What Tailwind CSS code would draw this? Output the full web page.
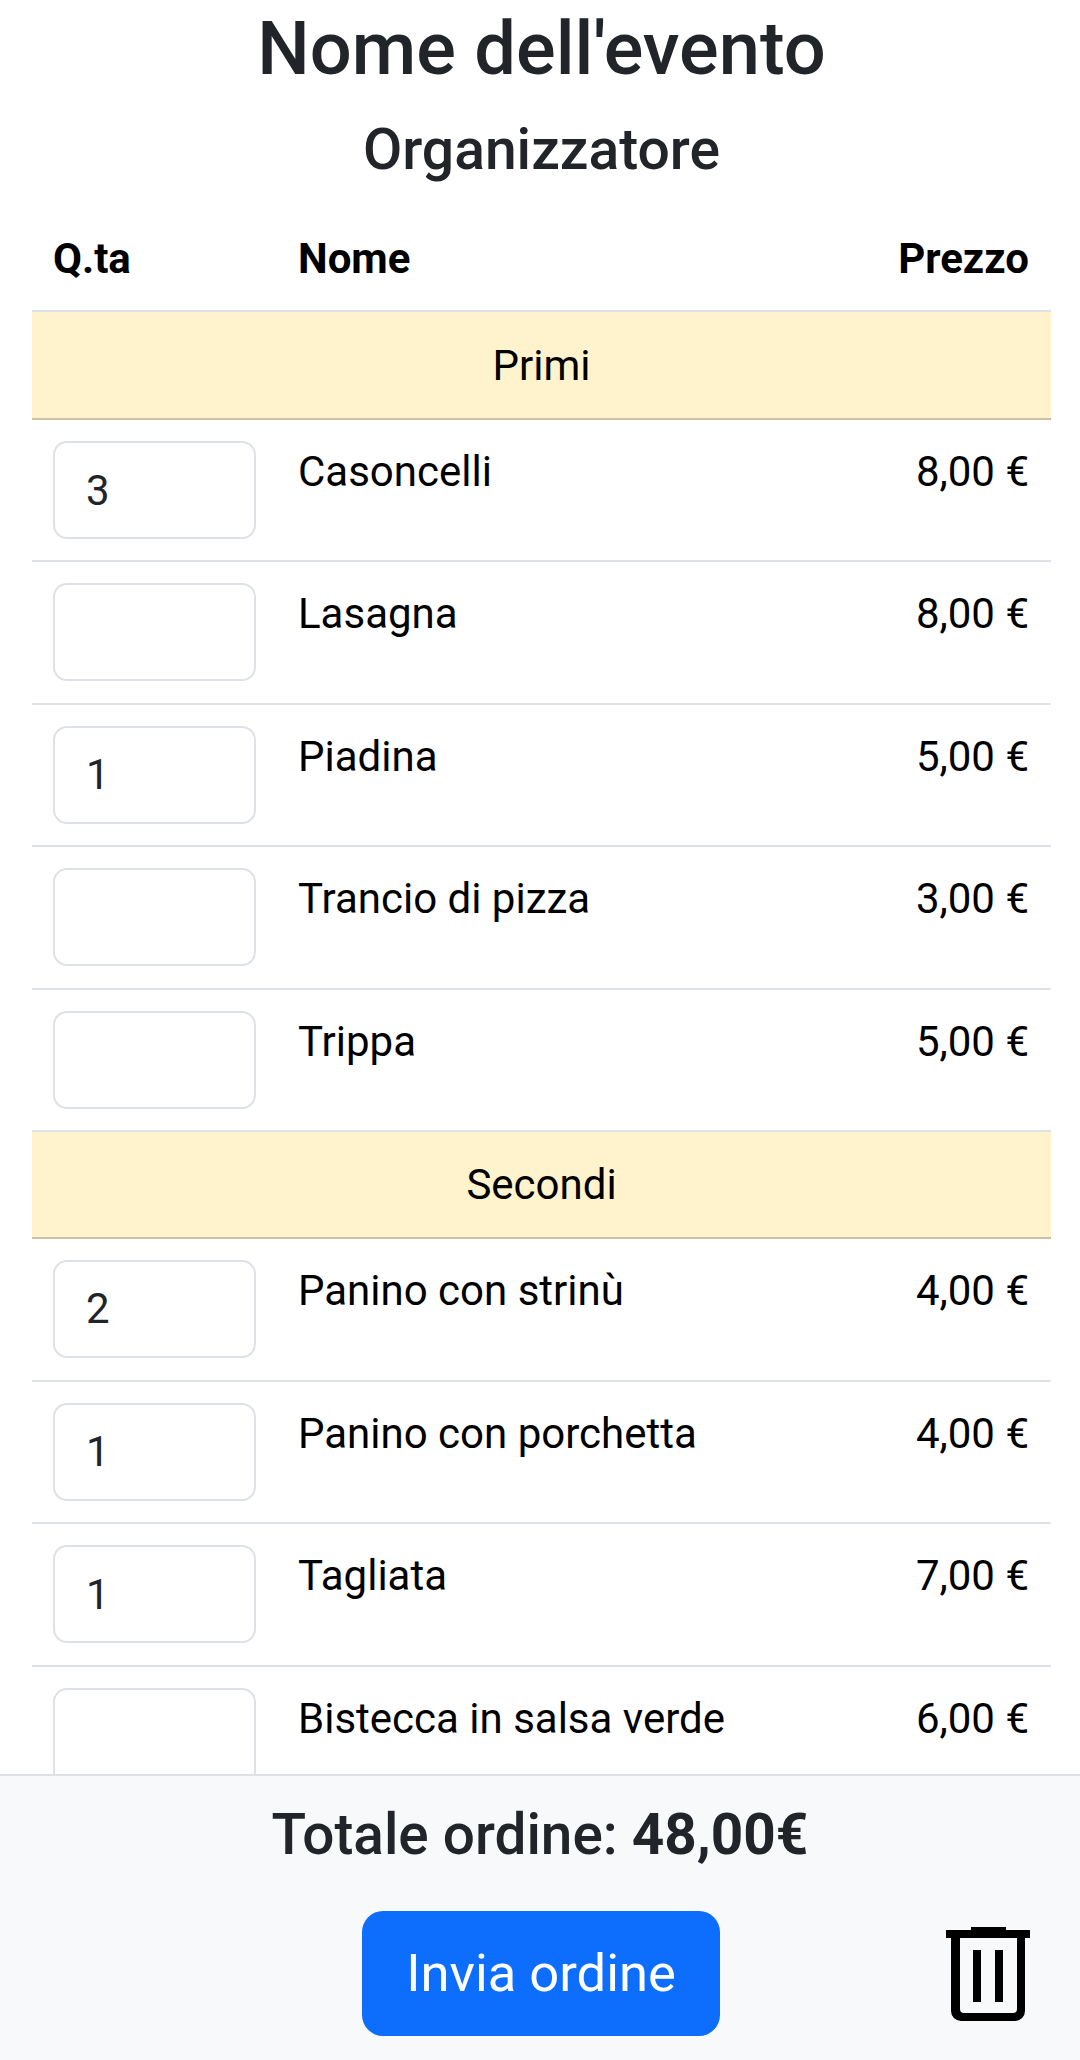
<!DOCTYPE html>
<html lang="it">
<head>
  <meta charset="UTF-8" />
  <title>Ordine</title>
  <script src="https://cdn.jsdelivr.net/npm/@tailwindcss/browser@4"></script>
</head>
<body class="relative h-[2060px] overflow-hidden bg-white font-['Roboto',sans-serif] text-[42px] leading-[61px] text-black">
  <h1 class="ml-[3px] mt-[9px] text-center text-[74px] leading-[80px] font-medium text-[#212529]">Nome dell'evento</h1>
  <h2 class="ml-[3px] mt-[31px] text-center text-[57px] leading-[60px] font-medium text-[#212529]">Organizzatore</h2>

  <div class="ml-[32px] mr-[29px] mt-[45px]">
    <div class="grid h-[87px] grid-cols-[245px_1fr_auto] border-b-[2px] border-[#dee2e6] pl-[21px] pr-[22px] pt-[3px] font-bold">
      <span>Q.ta</span>
      <span>Nome</span>
      <span>Prezzo</span>
    </div>

    <div class="flex h-[108px] items-center justify-center border-b-[2px] border-[#cbc0a0] bg-[#fff3cd]">Primi</div>
    <div class="grid h-[142.4px] grid-cols-[245px_1fr_auto] border-b-[2px] border-[#dee2e6] pl-[21px] pr-[22px] pt-[21px]">
      <input value="3" class="h-[98px] w-[203px] rounded-[14px] border-[2.5px] border-[#dee2e6] bg-white pl-[31px] text-[#212529]" />
      <span>Casoncelli</span>
      <span>8,00 €</span>
    </div>
    <div class="grid h-[142.4px] grid-cols-[245px_1fr_auto] border-b-[2px] border-[#dee2e6] pl-[21px] pr-[22px] pt-[21px]">
      <input value="" class="h-[98px] w-[203px] rounded-[14px] border-[2.5px] border-[#dee2e6] bg-white pl-[31px] text-[#212529]" />
      <span>Lasagna</span>
      <span>8,00 €</span>
    </div>
    <div class="grid h-[142.4px] grid-cols-[245px_1fr_auto] border-b-[2px] border-[#dee2e6] pl-[21px] pr-[22px] pt-[21px]">
      <input value="1" class="h-[98px] w-[203px] rounded-[14px] border-[2.5px] border-[#dee2e6] bg-white pl-[31px] text-[#212529]" />
      <span>Piadina</span>
      <span>5,00 €</span>
    </div>
    <div class="grid h-[142.4px] grid-cols-[245px_1fr_auto] border-b-[2px] border-[#dee2e6] pl-[21px] pr-[22px] pt-[21px]">
      <input value="" class="h-[98px] w-[203px] rounded-[14px] border-[2.5px] border-[#dee2e6] bg-white pl-[31px] text-[#212529]" />
      <span>Trancio di pizza</span>
      <span>3,00 €</span>
    </div>
    <div class="grid h-[142.4px] grid-cols-[245px_1fr_auto] border-b-[2px] border-[#dee2e6] pl-[21px] pr-[22px] pt-[21px]">
      <input value="" class="h-[98px] w-[203px] rounded-[14px] border-[2.5px] border-[#dee2e6] bg-white pl-[31px] text-[#212529]" />
      <span>Trippa</span>
      <span>5,00 €</span>
    </div>

    <div class="flex h-[107px] items-center justify-center border-b-[2px] border-[#cbc0a0] bg-[#fff3cd]">Secondi</div>
    <div class="grid h-[143px] grid-cols-[245px_1fr_auto] border-b-[2px] border-[#dee2e6] pl-[21px] pr-[22px] pt-[21px]">
      <input value="2" class="h-[98px] w-[203px] rounded-[14px] border-[2.5px] border-[#dee2e6] bg-white pl-[31px] text-[#212529]" />
      <span>Panino con strinù</span>
      <span>4,00 €</span>
    </div>
    <div class="grid h-[142.4px] grid-cols-[245px_1fr_auto] border-b-[2px] border-[#dee2e6] pl-[21px] pr-[22px] pt-[21px]">
      <input value="1" class="h-[98px] w-[203px] rounded-[14px] border-[2.5px] border-[#dee2e6] bg-white pl-[31px] text-[#212529]" />
      <span>Panino con porchetta</span>
      <span>4,00 €</span>
    </div>
    <div class="grid h-[142.4px] grid-cols-[245px_1fr_auto] border-b-[2px] border-[#dee2e6] pl-[21px] pr-[22px] pt-[21px]">
      <input value="1" class="h-[98px] w-[203px] rounded-[14px] border-[2.5px] border-[#dee2e6] bg-white pl-[31px] text-[#212529]" />
      <span>Tagliata</span>
      <span>7,00 €</span>
    </div>
    <div class="grid h-[142.4px] grid-cols-[245px_1fr_auto] border-b-[2px] border-[#dee2e6] pl-[21px] pr-[22px] pt-[21px]">
      <input value="" class="h-[98px] w-[203px] rounded-[14px] border-[2.5px] border-[#dee2e6] bg-white pl-[31px] text-[#212529]" />
      <span>Bistecca in salsa verde</span>
      <span>6,00 €</span>
    </div>
  </div>

  <footer class="absolute inset-x-0 bottom-0 h-[286px] border-t-[2.5px] border-[#dee2e6] bg-[#f8f9fa]">
    <h3 class="mt-[21px] text-center text-[56.7px] leading-[76px] font-medium text-[#212529]">Totale ordine: <b class="font-bold">48,00€</b></h3>
    <div class="mt-[38px] grid grid-cols-[1fr_auto_1fr] items-center pl-[52px] pr-[50px]">
      <span></span>
      <button class="h-[125px] w-[358px] rounded-[21px] bg-[#0d6efd] text-[52.5px] text-white">Invia ordine</button>
      <svg class="justify-self-end" width="84" height="94" viewBox="0 0 84 94" fill="#000">
        <path d="M25 0H60V3H84V11H79V84A10 10 0 0 1 69 94H15A10 10 0 0 1 5 84V11H0V3H25ZM14 11V82A4 4 0 0 0 18 86H67A4 4 0 0 0 71 82V11Z" fill-rule="evenodd"/>
        <rect x="27" y="23" width="8" height="52"/>
        <rect x="49" y="23" width="8" height="52"/>
      </svg>
    </div>
  </footer>
</body>
</html>
